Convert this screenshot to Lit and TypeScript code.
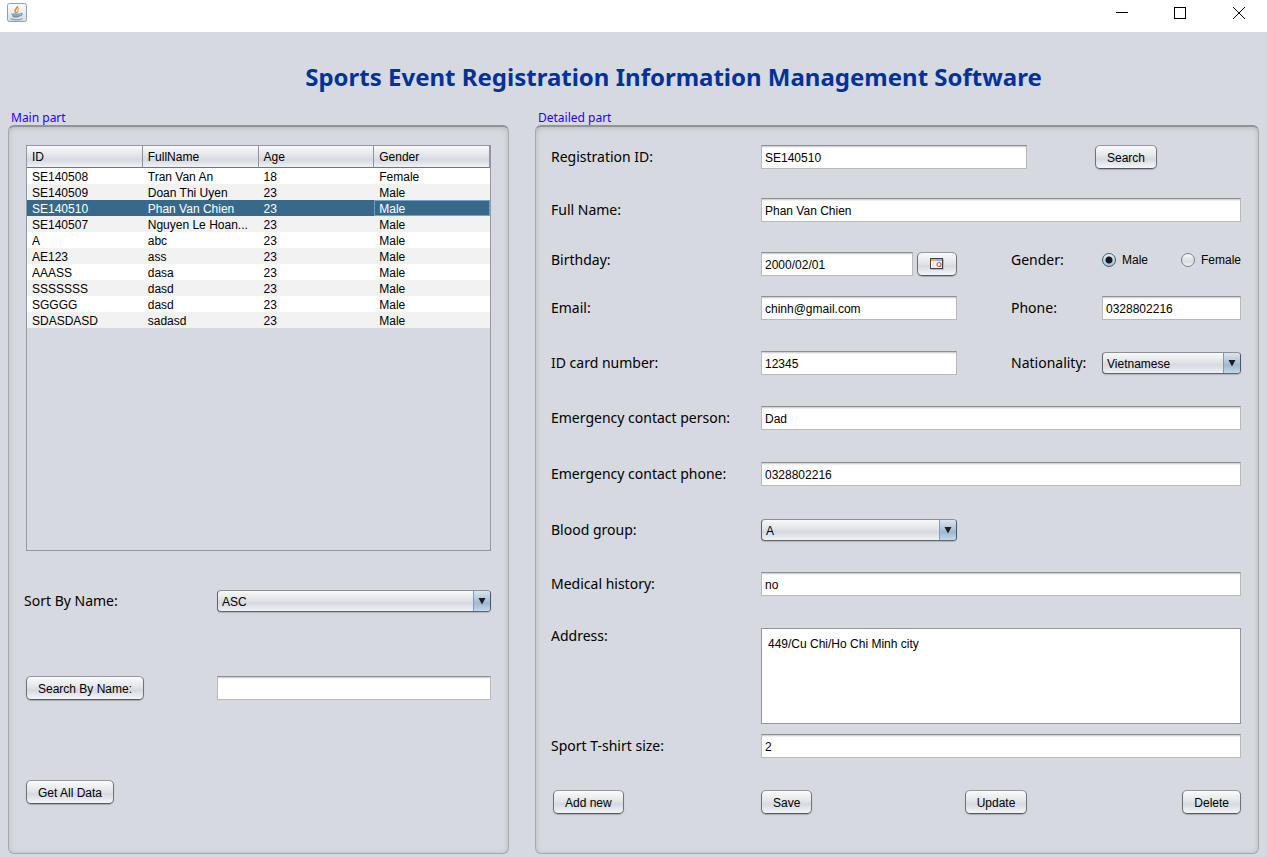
import { LitElement, html, css, svg } from "lit";
import { customElement, property, state } from "lit/decorators.js";
import { classMap } from "lit/directives/class-map.js";

const controls = css`
  * {
    box-sizing: border-box;
  }
  button,
  input,
  select,
  textarea {
    font: 12px/16px "Liberation Sans", Arial, sans-serif;
    color: #000;
    margin: 0;
  }
  button:focus-visible,
  input:focus-visible,
  select:focus-visible,
  textarea:focus-visible {
    outline: 2px solid #73a4d1;
    outline-offset: 1px;
  }
  .push {
    height: 24px;
    padding: 2px 11px 0;
    border: 1px solid #6b6e75;
    border-color: #95989f #6f7279 #55585f #6f7279;
    border-radius: 5px;
    background: linear-gradient(#fafbfc, #e3e5e9 45%, #d6d9df 60%, #f4f6fb);
    box-shadow: 0 1px 1px #a9acb4;
    white-space: nowrap;
  }
  .text {
    display: block;
    width: 100%;
    height: 24px;
    padding: 3px 3px 1px;
    border: 1px solid #b7b9bd;
    border-top-color: #8d8f94;
    border-radius: 0;
    background: #fff;
    box-shadow: inset 0 1px 0 #d2d3d6, inset 0 2px 0 #f0f0f2;
  }
  .label {
    font: 14px/24px "Noto Sans", Tahoma, sans-serif;
    color: #000;
    white-space: nowrap;
  }
`;

@customElement("window-bar")
class WindowBar extends LitElement {
  static styles = css`
    :host {
      display: flex;
      justify-content: space-between;
      height: 32px;
      background: #fff;
    }
    .app-icon {
      display: block;
      margin: 2px 0 0 6px;
    }
    .actions {
      display: flex;
      gap: 12px;
      padding-right: 5px;
    }
    .action {
      width: 46px;
      height: 26px;
      padding: 0;
      border: 0;
      background: none;
      display: grid;
      place-items: center;
    }
  `;

  private action(name: string, shape: unknown) {
    return html`<button class="action" aria-label=${name}>
      <svg width="14" height="14" viewBox="0 0 14 14" fill="none" stroke="#000">${shape}</svg>
    </button>`;
  }

  render() {
    return html`
      <svg class="app-icon" width="22" height="22" viewBox="0 0 22 22" fill="none">
        <defs>
          <linearGradient id="face" x1="0" y1="0" x2="0" y2="1">
            <stop offset="0" stop-color="#fdfdfd" />
            <stop offset="1" stop-color="#d9dcdf" />
          </linearGradient>
        </defs>
        <rect x="1.5" y="1.5" width="19" height="18" rx="2" fill="url(#face)" stroke="#8ba2b4" />
        <path d="M11.500 4C12.500 6 8 7 9 9.500C9.500 10.500 10.500 10.500 10.500 11" stroke="#e9812b" stroke-width="1.600" />
        <path d="M13 6.500C10.500 7.500 12.800 8.500 11.500 10.500" stroke="#ee9a52" stroke-width="1.200" />
        <path d="M5.500 11.500H14.500C14.500 13.500 13 15.500 12 15.500H8C7 15.500 5.500 13.500 5.500 11.500Z" fill="#6f93ad" />
        <path d="M6.500 13H13.500" stroke="#b9cbd8" stroke-width="0.700" />
        <path d="M14.500 11.500C17 11 16.500 13.500 14 13.800" stroke="#6f93ad" stroke-width="1.200" />
        <path d="M4.500 16.500C7 18.200 14 18.200 16.500 16.500" stroke="#7c9db5" stroke-width="1.200" />
      </svg>
      <div class="actions">
        ${this.action("Minimize", svg`<path d="M0 6.500H12" />`)}
        ${this.action("Maximize", svg`<rect x="0.500" y="1.500" width="11" height="11" />`)}
        ${this.action("Close", svg`<path d="M1 1L13 13M13 1L1 13" />`)}
      </div>
    `;
  }
}

@customElement("combo-box")
class ComboBox extends LitElement {
  @property() value = "";
  @property() name = "";
  @property({ type: Array }) options: string[] = [];

  static styles = [
    controls,
    css`
      :host {
        display: block;
        padding: 1px 0;
      }
      .combo {
        display: grid;
        grid-template-columns: 1fr 17px;
        height: 22px;
        border: 1px solid #60656e;
        border-top-color: #8b9098;
        border-right-color: #3f5b74;
        border-radius: 4px;
        overflow: hidden;
        background: linear-gradient(#f8f9fa, #e1e3e7 45%, #d6d9df 60%, #f0f2f7);
        box-shadow: 0 1px 1px #b0b3ba;
      }
      .list {
        grid-area: 1 / 1 / 2 / 3;
        appearance: none;
        border: 0;
        padding: 2px 20px 0 4px;
        background: none;
      }
      .arrow {
        grid-area: 1 / 2 / 2 / 3;
        display: grid;
        place-items: center;
        pointer-events: none;
        border-left: 1px solid #7f9db8;
        background: linear-gradient(#dbe5ee, #b2c5d8 45%, #a0b7cd 60%, #c2d8ec);
      }
    `,
  ];

  render() {
    return html`<div class="combo">
      <select class="list" aria-label=${this.name}>
        ${this.options.map((o) => html`<option ?selected=${o === this.value}>${o}</option>`)}
      </select>
      <span class="arrow">
        <svg width="8" height="8" viewBox="0 0 8 8"><path d="M0.500 1H7.500L4 7.500Z" fill="#1c1f22" /></svg>
      </span>
    </div>`;
  }
}

type Row = [string, string, string, string];

const rows: Row[] = [
  ["SE140508", "Tran Van An", "18", "Female"],
  ["SE140509", "Doan Thi Uyen", "23", "Male"],
  ["SE140510", "Phan Van Chien", "23", "Male"],
  ["SE140507", "Nguyen Le Hoan...", "23", "Male"],
  ["A", "abc", "23", "Male"],
  ["AE123", "ass", "23", "Male"],
  ["AAASS", "dasa", "23", "Male"],
  ["SSSSSSS", "dasd", "23", "Male"],
  ["SGGGG", "dasd", "23", "Male"],
  ["SDASDASD", "sadasd", "23", "Male"],
];

@customElement("main-part")
class MainPart extends LitElement {
  @state() private selected = "SE140510";

  static styles = [
    controls,
    css`
      :host {
        display: block;
      }
      .scroll {
        height: 406px;
        border: 1px solid #9297a1;
        margin-bottom: 38px;
      }
      .grid {
        width: 100%;
        table-layout: fixed;
        border-collapse: separate;
        border-spacing: 0;
        font: 12px/16px "Liberation Sans", Arial, sans-serif;
      }
      .head {
        height: 22px;
        padding: 0 5px;
        border-right: 1px solid #8e939d;
        border-bottom: 1px solid #6f747e;
        background: linear-gradient(#fafafb, #dfe2e7 50%, #d6d9df 65%, #eff2f7);
        font-weight: 400;
        text-align: left;
      }
      .cell {
        height: 16px;
        padding: 2px 5px 0;
        line-height: 14px;
        background: #fff;
        white-space: nowrap;
      }
      .row:nth-child(even) .cell {
        background: #f2f2f2;
      }
      .row.selected .cell {
        background: #39698a;
        color: #fff;
      }
      .row.selected .cell:last-child {
        box-shadow: inset 0 0 0 1px #73a4d1;
      }
      .tools {
        display: grid;
        grid-template-columns: 191px 1fr;
        grid-template-rows: 87px 104px 24px;
        align-items: start;
      }
      .push {
        justify-self: start;
      }
      .sort {
        margin-left: -2px;
      }
    `,
  ];

  render() {
    return html`
      <div class="scroll">
        <table class="grid">
          <thead>
            <tr>
              ${["ID", "FullName", "Age", "Gender"].map((h) => html`<th class="head">${h}</th>`)}
            </tr>
          </thead>
          <tbody>
            ${rows.map(
              (r) => html`<tr
                class=${classMap({ row: true, selected: r[0] === this.selected })}
                @click=${() => (this.selected = r[0])}
              >
                ${r.map((c) => html`<td class="cell">${c}</td>`)}
              </tr>`
            )}
          </tbody>
        </table>
      </div>
      <div class="tools">
        <span class="label sort">Sort By Name:</span>
        <combo-box name="Sort By Name" value="ASC" .options=${["ASC", "DESC"]}></combo-box>
        <button class="push">Search By Name:</button>
        <input class="text" aria-label="Search By Name" />
        <button class="push">Get All Data</button>
      </div>
    `;
  }
}

@customElement("detailed-part")
class DetailedPart extends LitElement {
  static styles = [
    controls,
    css`
      :host {
        display: block;
      }
      .form {
        display: grid;
        grid-template-columns: 210px 196fr 54px 91px 139fr;
        grid-template-rows: 53px 50px 48px 55px 55px 56px 56px 54px 56px 106px 56px;
        align-items: start;
      }
      .wide {
        grid-column: 2 / 6;
      }
      .first {
        grid-column: 1;
      }
      .second {
        grid-column: 4;
      }
      .lookup {
        display: grid;
        grid-template-columns: 266fr 68px 146fr;
        justify-items: start;
      }
      .lookup .push {
        grid-column: 3;
      }
      .date {
        display: grid;
        grid-template-columns: 1fr 40px;
        gap: 4px;
        padding-top: 4px;
      }
      .calendar {
        padding: 0;
        display: grid;
        place-items: center;
      }
      .radios {
        display: grid;
        grid-template-columns: 79px auto;
        margin-right: -4px;
      }
      .choice {
        display: flex;
        align-items: center;
        gap: 6px;
        font: 12px/24px "Liberation Sans", Arial, sans-serif;
      }
      .radio {
        appearance: none;
        width: 14px;
        height: 14px;
        border: 1px solid #7b7f87;
        border-radius: 50%;
        background: linear-gradient(#fafafb, #d9dce1 60%, #f0f2f6);
      }
      .radio:checked {
        border-color: #3c5a74;
        background: radial-gradient(circle, #15181b 3px, transparent 4px), linear-gradient(#e8f0f7, #a5bed5);
      }
      .top {
        line-height: 16px;
      }
      .area {
        display: block;
        width: 100%;
        height: 96px;
        padding: 7px 6px;
        border: 1px solid #9297a1;
        border-radius: 0;
        background: #fff;
        resize: none;
      }
      .buttons {
        display: grid;
        grid-template-columns: 208px 203fr 217fr auto;
        justify-items: start;
        padding-left: 2px;
      }
    `,
  ];

  private line(id: string, label: string, value: string, pos: string, wide = false) {
    return html`<label class="label ${pos}" for=${id}>${label}</label>
      <input class="text ${wide ? "wide" : ""}" id=${id} .value=${value} />`;
  }

  render() {
    return html`
      <div class="form">
        <label class="label" for="rid">Registration ID:</label>
        <div class="lookup wide">
          <input class="text" id="rid" .value=${"SE140510"} />
          <button class="push">Search</button>
        </div>
        ${this.line("full", "Full Name:", "Phan Van Chien", "first", true)}
        <label class="label first" for="birth">Birthday:</label>
        <div class="date">
          <input class="text" id="birth" .value=${"2000/02/01"} />
          <button class="push calendar" aria-label="Pick a date">
            <svg width="14" height="12" viewBox="0 0 14 12">
              <path d="M1 11.500H13.500V1" fill="none" stroke="#b4b8bf" />
              <rect x="0.500" y="0.500" width="12" height="10" fill="#f4f4f6" stroke="#3f444c" />
              <path d="M1 1H6V3H1Z" fill="#f0b040" />
              <path d="M6 1H12V3H6Z" fill="#8fb2ea" />
              <path d="M3.500 4V10" stroke="#dcdee3" />
              <circle cx="9" cy="6.500" r="2" fill="#fff" stroke="#e2555a" stroke-width="1.200" />
            </svg>
          </button>
        </div>
        <span class="label second">Gender:</span>
        <div class="radios">
          <label class="choice"><input class="radio" type="radio" name="gender" checked />Male</label>
          <label class="choice"><input class="radio" type="radio" name="gender" />Female</label>
        </div>
        ${this.line("email", "Email:", "chinh@gmail.com", "first")}
        ${this.line("phone", "Phone:", "0328802216", "second")}
        ${this.line("card", "ID card number:", "12345", "first")}
        <span class="label second">Nationality:</span>
        <combo-box name="Nationality" value="Vietnamese" .options=${["Vietnamese"]}></combo-box>
        ${this.line("person", "Emergency contact person:", "Dad", "first", true)}
        ${this.line("ephone", "Emergency contact phone:", "0328802216", "first", true)}
        <span class="label first">Blood group:</span>
        <combo-box name="Blood group" value="A" .options=${["A", "B", "AB", "O"]}></combo-box>
        ${this.line("history", "Medical history:", "no", "first", true)}
        <label class="label first top" for="address">Address:</label>
        <textarea class="area wide" id="address" .value=${"449/Cu Chi/Ho Chi Minh city"}></textarea>
        ${this.line("size", "Sport T-shirt size:", "2", "first", true)}
      </div>
      <div class="buttons">
        <button class="push">Add new</button>
        <button class="push">Save</button>
        <button class="push">Update</button>
        <button class="push">Delete</button>
      </div>
    `;
  }
}

@customElement("app-root")
class AppRoot extends LitElement {
  static styles = css`
    :host {
      display: flex;
      flex-direction: column;
      min-height: 100vh;
      background: #d6d9df;
    }
    .title {
      margin: 0;
      padding: 29px 0 0 80px;
      font: bold 24px/32px "Noto Sans", Tahoma, sans-serif;
      color: #003399;
      text-align: center;
    }
    .parts {
      flex: 1;
      display: grid;
      grid-template-columns: 501fr 724fr;
      gap: 26px;
      padding: 18px 8px 3px;
    }
    .part {
      display: flex;
      flex-direction: column;
      min-width: 0;
    }
    .caption {
      margin: 0;
      padding-left: 3px;
      font: 12px/14px "Noto Sans", Tahoma, sans-serif;
      color: #1f00ff;
    }
    .panel {
      flex: 1;
      padding: 18px 17px 38px;
      border: 1px solid #a5a8ae;
      border-top: 2px solid #909399;
      border-radius: 6px;
      box-shadow: inset 0 1px 5px #b4b7bc;
    }
    .panel.detail {
      padding-left: 15px;
    }
  `;

  render() {
    return html`
      <window-bar></window-bar>
      <h1 class="title">Sports Event Registration Information Management Software</h1>
      <div class="parts">
        <section class="part">
          <h2 class="caption">Main part</h2>
          <div class="panel"><main-part></main-part></div>
        </section>
        <section class="part">
          <h2 class="caption">Detailed part</h2>
          <div class="panel detail"><detailed-part></detailed-part></div>
        </section>
      </div>
    `;
  }
}
